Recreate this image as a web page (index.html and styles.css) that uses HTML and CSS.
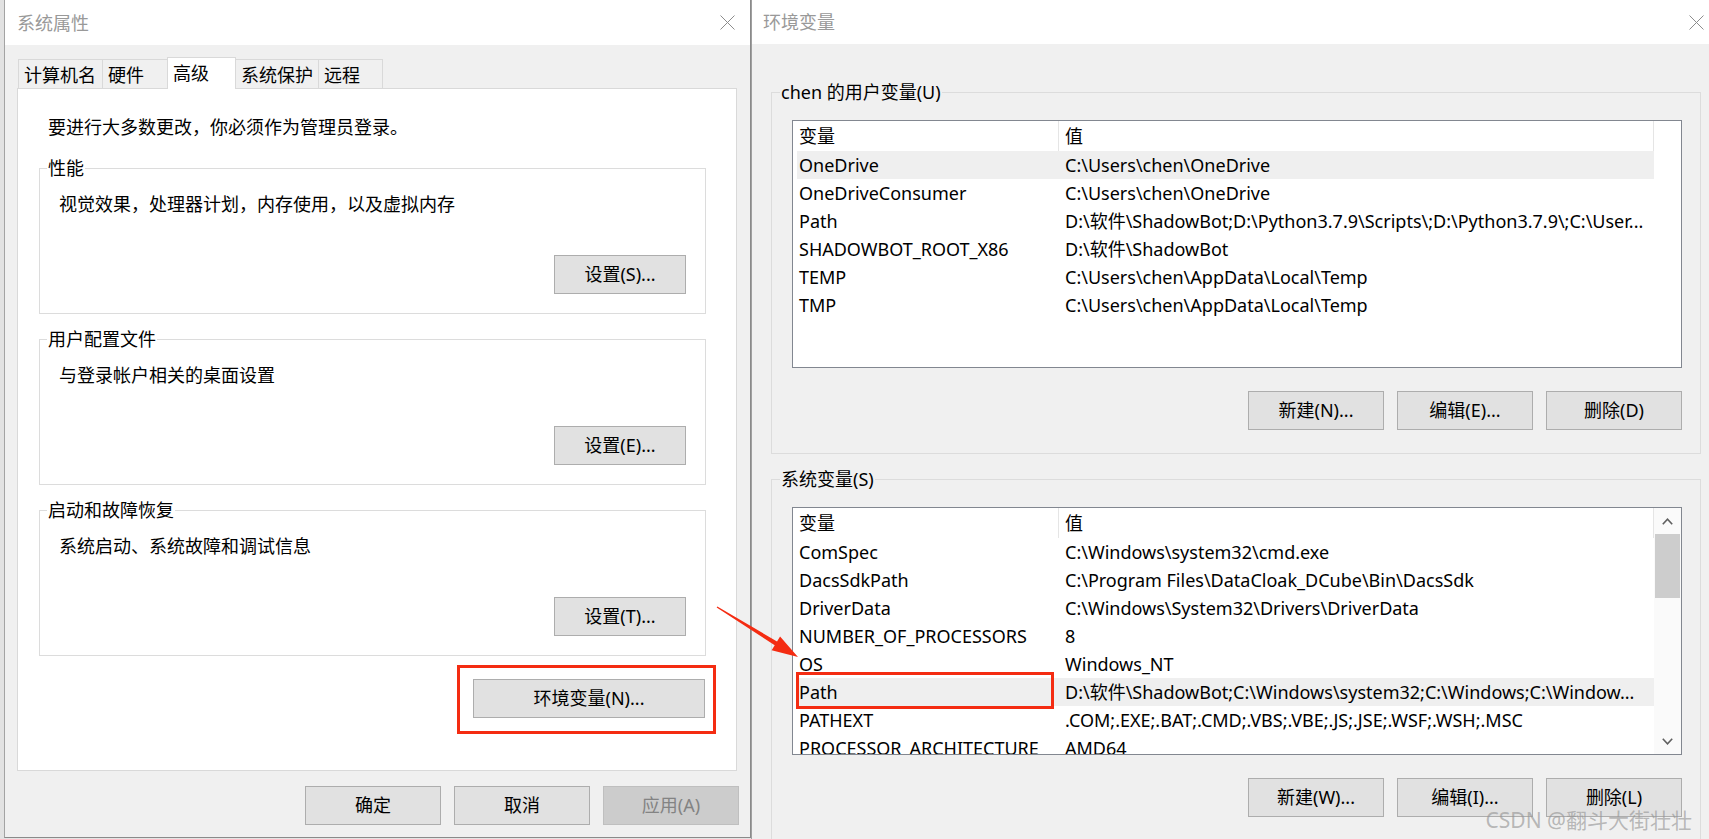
FILE: index.html
```html
<!DOCTYPE html>
<html lang="zh-CN">
<head>
<meta charset="utf-8">
<title>系统属性 / 环境变量</title>
<link rel="stylesheet" href="styles.css">
</head>
<body>
<div class="desktop">
  <div class="backdrop"></div>

  <section class="dialog sysprops">
    <header class="titlebar">
      <span class="title">系统属性</span>
      <svg class="close" viewBox="0 0 15 15"><path d="M0.5 0.5L14.5 14.5M14.5 0.5L0.5 14.5"/></svg>
    </header>
    <div class="body">
      <div class="tabs">
        <div class="tab t1">计算机名</div>
        <div class="tab t2">硬件</div>
        <div class="tab t3 active">高级</div>
        <div class="tab t4">系统保护</div>
        <div class="tab t5">远程</div>
      </div>
      <div class="panel">
        <p class="intro">要进行大多数更改，你必须作为管理员登录。</p>
        <div class="group">
          <span class="group-label">性能</span>
          <p class="desc">视觉效果，处理器计划，内存使用，以及虚拟内存</p>
          <button class="btn settings">设置(S)...</button>
        </div>
        <div class="group">
          <span class="group-label">用户配置文件</span>
          <p class="desc">与登录帐户相关的桌面设置</p>
          <button class="btn settings">设置(E)...</button>
        </div>
        <div class="group last">
          <span class="group-label">启动和故障恢复</span>
          <p class="desc">系统启动、系统故障和调试信息</p>
          <button class="btn settings">设置(T)...</button>
        </div>
        <div class="mark-box"><button class="btn env">环境变量(N)...</button></div>
      </div>
      <div class="actions">
        <button class="btn">确定</button>
        <button class="btn">取消</button>
        <button class="btn disabled">应用(A)</button>
      </div>
    </div>
  </section>

  <section class="dialog envvars">
    <header class="titlebar">
      <span class="title">环境变量</span>
      <svg class="close" viewBox="0 0 15 15"><path d="M0.5 0.5L14.5 14.5M14.5 0.5L0.5 14.5"/></svg>
    </header>
    <div class="body">
      <div class="egroup">
        <span class="group-label">chen 的用户变量(U)</span>
        <div class="list">
          <div class="list-main">
            <div class="row head"><div class="cell name">变量</div><div class="cell value">值</div></div>
            <div class="row sel"><div class="cell name">OneDrive</div><div class="cell value">C:\Users\chen\OneDrive</div></div>
            <div class="row"><div class="cell name">OneDriveConsumer</div><div class="cell value">C:\Users\chen\OneDrive</div></div>
            <div class="row"><div class="cell name">Path</div><div class="cell value">D:\软件\ShadowBot;D:\Python3.7.9\Scripts\;D:\Python3.7.9\;C:\User...</div></div>
            <div class="row"><div class="cell name">SHADOWBOT_ROOT_X86</div><div class="cell value">D:\软件\ShadowBot</div></div>
            <div class="row"><div class="cell name">TEMP</div><div class="cell value">C:\Users\chen\AppData\Local\Temp</div></div>
            <div class="row"><div class="cell name">TMP</div><div class="cell value">C:\Users\chen\AppData\Local\Temp</div></div>
          </div>
          <div class="list-side"></div>
        </div>
        <div class="btn-row">
          <button class="btn">新建(N)...</button>
          <button class="btn">编辑(E)...</button>
          <button class="btn">删除(D)</button>
        </div>
      </div>

      <div class="egroup second">
        <span class="group-label">系统变量(S)</span>
        <div class="list">
          <div class="list-main">
            <div class="row head"><div class="cell name">变量</div><div class="cell value">值</div></div>
            <div class="row"><div class="cell name">ComSpec</div><div class="cell value">C:\Windows\system32\cmd.exe</div></div>
            <div class="row"><div class="cell name">DacsSdkPath</div><div class="cell value">C:\Program Files\DataCloak_DCube\Bin\DacsSdk</div></div>
            <div class="row"><div class="cell name">DriverData</div><div class="cell value">C:\Windows\System32\Drivers\DriverData</div></div>
            <div class="row"><div class="cell name">NUMBER_OF_PROCESSORS</div><div class="cell value">8</div></div>
            <div class="row"><div class="cell name">OS</div><div class="cell value">Windows_NT</div></div>
            <div class="row sel"><div class="cell name marked">Path<span class="path-mark"></span></div><div class="cell value">D:\软件\ShadowBot;C:\Windows\system32;C:\Windows;C:\Window...</div></div>
            <div class="row"><div class="cell name">PATHEXT</div><div class="cell value">.COM;.EXE;.BAT;.CMD;.VBS;.VBE;.JS;.JSE;.WSF;.WSH;.MSC</div></div>
            <div class="row"><div class="cell name">PROCESSOR_ARCHITECTURE</div><div class="cell value">AMD64</div></div>
          </div>
          <div class="scrollbar">
            <div class="sb-btn"><svg viewBox="0 0 11 7"><path d="M0.8 6.2L5.5 1.2L10.2 6.2"/></svg></div>
            <div class="sb-thumb"></div>
            <div class="sb-track"></div>
            <div class="sb-btn"><svg viewBox="0 0 11 7"><path d="M0.8 0.8L5.5 5.8L10.2 0.8"/></svg></div>
          </div>
        </div>
        <div class="btn-row">
          <button class="btn">新建(W)...</button>
          <button class="btn">编辑(I)...</button>
          <button class="btn">删除(L)</button>
        </div>
      </div>
    </div>
  </section>
</div>

<svg class="arrow" viewBox="0 0 110 70" width="110" height="70">
  <polygon points="17.32,11.49 77.03,46.48 80.07,41.54 98,62 71.67,55.16 74.72,50.22 16.69,12.51"/>
</svg>
<div class="watermark">CSDN @翻斗大街壮壮</div>
</body>
</html>
```

FILE: styles.css
```css
* { box-sizing: border-box; }
html, body { margin: 0; padding: 0; }
body {
  width: 1709px;
  height: 839px;
  overflow: hidden;
  position: relative;
  background: #e4e4e4;
  font-family: "Noto Sans", "Noto Sans CJK SC", sans-serif;
  font-size: 18px;
  color: #000;
}
p { margin: 0; }

.desktop { display: flex; height: 839px; }
.backdrop { width: 4px; flex: none; background: #e2e2e2; }

.dialog {
  flex: none;
  display: flex;
  flex-direction: column;
  background: #f0f0f0;
}
.sysprops {
  width: 747px;
  height: 838px;
  border-left: 1px solid #a3a3a3;
  border-right: 1px solid #8a8a8a;
  border-bottom: 1px solid #8a8a8a;
}
.envvars {
  width: 968px;
  height: 839px;
  border-left: 1px solid #a0a0a0;
}

.titlebar {
  flex: none;
  height: 45px;
  background: #fff;
  display: flex;
  align-items: center;
  justify-content: space-between;
  padding: 0 15px 0 12px;
}
.envvars .titlebar { height: 44px; padding: 0 15px 0 11px; }
.title { color: #999; line-height: 24px; }
.close { width: 15px; height: 15px; fill: none; stroke: #8c8c8c; stroke-width: 1; }

.sysprops .body {
  flex: 1;
  display: flex;
  flex-direction: column;
  padding-top: 12px;
}

/* tabs */
.tabs {
  display: flex;
  align-items: flex-end;
  height: 32px;
  margin: 0 0 -1px 13px;
}
.tab {
  height: 30px;
  border: 1px solid #d9d9d9;
  border-bottom: none;
  background: #f0f0f0;
  padding: 3px 0 0 5px;
  line-height: 24px;
  margin-left: -1px;
  white-space: nowrap;
}
.tab.t1 { margin-left: 0; width: 85px; }
.tab.t2 { width: 66px; }
.tab.t3 { width: 69px; }
.tab.t4 { width: 84px; }
.tab.t5 { width: 65px; }
.tab.active {
  height: 32px;
  background: #fff;
  position: relative;
  z-index: 1;
}

/* panel */
.panel {
  flex: none;
  margin-left: 12px;
  width: 720px;
  height: 683px;
  background: #fff;
  border: 1px solid #d9d9d9;
  padding: 26px 30px 0 21px;
  display: flex;
  flex-direction: column;
}
.intro { margin: 0 0 29px 9px; line-height: 24px; }

.group {
  height: 146px;
  border: 1px solid #dcdcdc;
  padding: 0 19px 19px 19px;
  margin-bottom: 25px;
  display: flex;
  flex-direction: column;
}
.group.last { margin-bottom: 9px; }
.group-label {
  align-self: flex-start;
  margin: -13px 0 0 -12px;
  padding: 0 1px;
  background: #fff;
  line-height: 24px;
  white-space: nowrap;
}
.desc { margin-top: 12px; line-height: 24px; }

.btn {
  flex: none;
  width: 136px;
  height: 39px;
  padding: 0;
  margin: 0;
  font: inherit;
  line-height: 37px;
  color: #000;
  background: #e1e1e1;
  border: 1px solid #adadad;
  text-align: center;
  white-space: nowrap;
}
.btn.settings { width: 132px; margin-top: auto; align-self: flex-end; }
.btn.disabled { background: #cccccc; border-color: #bfbfbf; color: #838383; }

.mark-box {
  align-self: flex-end;
  margin-right: -10px;
  border: 3px solid #f42c12;
  padding: 11px 8px 13px 13px;
}
.btn.env { width: 232px; }

.actions {
  display: flex;
  justify-content: flex-end;
  gap: 13px;
  margin-top: 15px;
  padding-right: 11px;
}

/* env vars dialog */
.envvars .body {
  flex: 1;
  padding: 48px 18px 0 19px;
  overflow: hidden;
}
.egroup {
  border: 1px solid #dcdcdc;
  padding: 0 18px 23px 20px;
  display: flex;
  flex-direction: column;
}
.egroup.second { margin-top: 25px; height: 420px; }
.egroup .group-label { background: #f0f0f0; margin-left: -12px; }

.list {
  margin-top: 16px;
  height: 248px;
  border: 1px solid #828790;
  background: #fff;
  display: flex;
  padding-left: 4px;
  overflow: hidden;
}
.list-main { width: 857px; flex: none; }
.list-side { flex: 1; }

.row {
  display: flex;
  height: 28px;
  line-height: 28px;
  white-space: nowrap;
}
.row.head { height: 30px; line-height: 30px; }
.row.sel { background: #efefef; }
.cell.name { width: 261px; flex: none; padding-left: 2px; }
.cell.value {
  flex: 1;
  min-width: 0;
  padding-left: 7px;
  overflow: hidden;
  text-overflow: ellipsis;
}
.head .cell.value {
  border-left: 1px solid #e5e5e5;
  border-right: 1px solid #e5e5e5;
  padding-left: 6px;
}
.cell.marked { position: relative; }
.path-mark {
  position: absolute;
  left: -1px;
  top: -6px;
  width: 258px;
  height: 37px;
  border: 3px solid #f42c12;
}

.scrollbar {
  flex: 1;
  display: flex;
  flex-direction: column;
  align-items: center;
  background: #fafafa;
}
.sb-btn {
  height: 26px;
  width: 100%;
  display: flex;
  align-items: center;
  justify-content: center;
  flex: none;
}
.sb-btn svg { width: 11px; height: 7px; fill: none; stroke: #606060; stroke-width: 1.6; }
.sb-thumb { width: 25px; height: 64px; background: #cdcdcd; flex: none; }
.sb-track { flex: 1; }

.btn-row {
  display: flex;
  justify-content: flex-end;
  gap: 13px;
  margin-top: 23px;
}

/* annotations */
.arrow {
  position: absolute;
  left: 700px;
  top: 595px;
  fill: #f42c12;
}
.watermark {
  position: absolute;
  right: 17px;
  top: 808px;
  font-size: 21px;
  line-height: 24px;
  color: rgba(150, 150, 150, 0.65);
  white-space: nowrap;
}
```
